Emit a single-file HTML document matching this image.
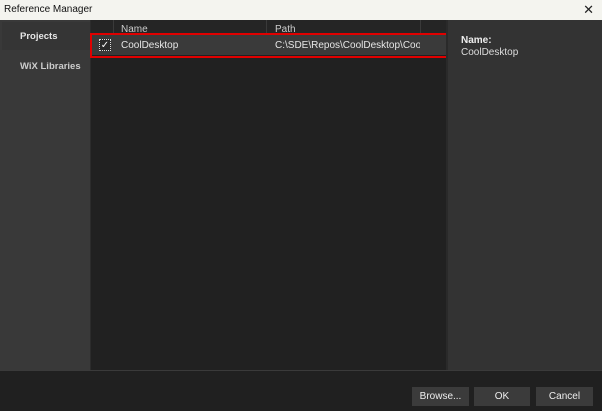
<!DOCTYPE html>
<html><head><style>
body{margin:0;width:602px;height:411px;overflow:hidden;background:#202020;font-family:"Liberation Sans",sans-serif;font-size:10px;color:#e6e6e6;position:relative}
div{position:absolute;box-sizing:border-box}
.btn{top:387px;height:19px;background:#3b3b3b;text-align:center;line-height:19px;font-size:10px;color:#eee}
</style></head><body>
<div style="left:0;top:0;width:602px;height:20px;background:#f4f4ef;color:#111;font-size:10px;line-height:19px;padding-left:4px">Reference Manager</div>
<div style="right:8px;top:3px;color:#222;font-size:13px;line-height:14px">✕</div>
<div style="left:0;top:20px;width:90px;height:350px;background:#393939"></div>
<div style="left:2px;top:22px;width:88px;height:28px;background:#353535"></div>
<div style="left:20px;top:31px;font-weight:bold;font-size:9.5px">Projects</div>
<div style="left:20px;top:61px;font-weight:bold;font-size:9.5px;color:#ccc">WiX Libraries</div>
<div style="left:90px;top:20px;width:357px;height:350px;background:#212121;border-left:1px solid #2c2c2c"></div>
<div style="left:91px;top:20px;width:355px;height:15px;background:#252525"></div>
<div style="left:113px;top:20px;width:1px;height:15px;background:#3a3a3a"></div>
<div style="left:266px;top:20px;width:1px;height:15px;background:#3a3a3a"></div>
<div style="left:420px;top:20px;width:1px;height:15px;background:#3a3a3a"></div>
<div style="left:121px;top:24px;color:#ccc;font-size:10px">Name</div>
<div style="left:275px;top:24px;color:#ccc;font-size:10px">Path</div>
<div style="left:91px;top:35px;width:355px;height:20px;background:#3a3a3a"></div>
<div style="left:90px;top:33px;width:358px;height:25px;border:2px solid #e00000"></div>
<div style="left:99px;top:39px;width:12px;height:12px;border:1px dotted #ddd;background:#2a2a2a;font-size:10px;line-height:11px;text-align:center;color:#fff">✓</div>
<div style="left:121px;top:40px">CoolDesktop</div>
<div style="left:275px;top:40px;width:145px;overflow:hidden;white-space:nowrap">C:\SDE\Repos\CoolDesktop\CoolDesktop</div>
<div style="left:446px;top:20px;width:2px;height:350px;background:#2a2a2a"></div>
<div style="left:448px;top:20px;width:154px;height:350px;background:#333"></div>
<div style="left:461px;top:35px;font-weight:bold;color:#eee">Name:</div>
<div style="left:461px;top:47px;color:#ddd">CoolDesktop</div>
<div style="left:0;top:370px;width:602px;height:1px;background:#3a3a3a"></div>
<div class="btn" style="left:412px;width:57px">Browse...</div>
<div class="btn" style="left:474px;width:56px">OK</div>
<div class="btn" style="left:536px;width:57px">Cancel</div>
</body></html>
